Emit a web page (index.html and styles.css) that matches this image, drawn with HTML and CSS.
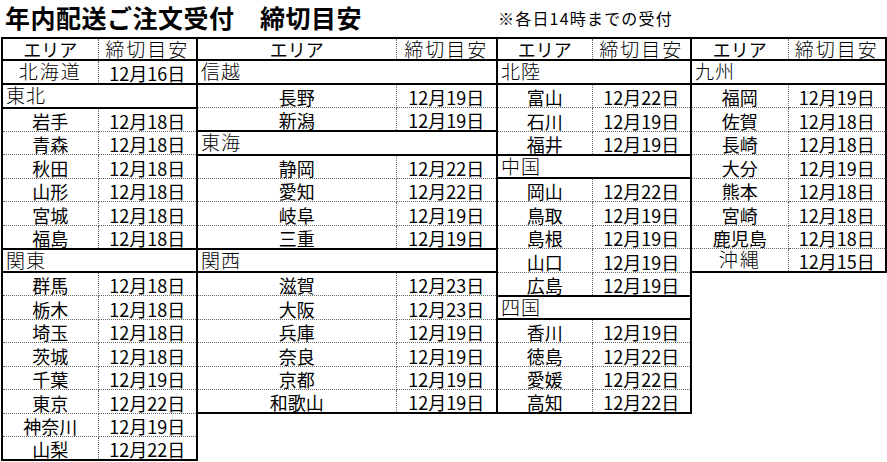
FILE: index.html
```html
<!DOCTYPE html>
<html lang="ja">
<head>
    <meta charset="UTF-8">
    <title>年内配送ご注文受付 締切目安</title>
    <link rel="stylesheet" href="styles.css">
</head>
<body>

    <div class="top">
        <h1 class="title">年内配送ご注文受付　締切目安</h1>
        <p class="note">※各日14時までの受付</p>
    </div>

    <table class="sheet">
        <colgroup>
            <col class="c-a"><col class="c-b">
            <col class="c-c"><col class="c-d">
            <col class="c-e"><col class="c-f">
            <col class="c-g"><col class="c-h">
        </colgroup>
        <tr class="head">
            <td class="n">エリア</td><td class="d thin">締切目安</td>
            <td class="n">エリア</td><td class="d thin">締切目安</td>
            <td class="n">エリア</td><td class="d thin">締切目安</td>
            <td class="n">エリア</td><td class="d thin">締切目安</td>
        </tr>
        <tr class="first">
            <td class="n thin pre">北海道</td><td class="d pre">12月16日</td>
            <td class="r" colspan="2">信越</td>
            <td class="r" colspan="2">北陸</td>
            <td class="r" colspan="2">九州</td>
        </tr>
        <tr>
            <td class="r" colspan="2">東北</td>
            <td class="n">長野</td><td class="d">12月19日</td>
            <td class="n">富山</td><td class="d">12月22日</td>
            <td class="n">福岡</td><td class="d">12月19日</td>
        </tr>
        <tr>
            <td class="n">岩手</td><td class="d">12月18日</td>
            <td class="n">新潟</td><td class="d">12月19日</td>
            <td class="n">石川</td><td class="d">12月19日</td>
            <td class="n">佐賀</td><td class="d">12月18日</td>
        </tr>
        <tr>
            <td class="n">青森</td><td class="d">12月18日</td>
            <td class="r" colspan="2">東海</td>
            <td class="n">福井</td><td class="d">12月19日</td>
            <td class="n">長崎</td><td class="d">12月18日</td>
        </tr>
        <tr>
            <td class="n">秋田</td><td class="d">12月18日</td>
            <td class="n">静岡</td><td class="d">12月22日</td>
            <td class="r" colspan="2">中国</td>
            <td class="n">大分</td><td class="d">12月19日</td>
        </tr>
        <tr>
            <td class="n">山形</td><td class="d">12月18日</td>
            <td class="n">愛知</td><td class="d">12月22日</td>
            <td class="n">岡山</td><td class="d">12月22日</td>
            <td class="n">熊本</td><td class="d">12月18日</td>
        </tr>
        <tr>
            <td class="n">宮城</td><td class="d">12月18日</td>
            <td class="n">岐阜</td><td class="d">12月19日</td>
            <td class="n">鳥取</td><td class="d">12月19日</td>
            <td class="n">宮崎</td><td class="d">12月18日</td>
        </tr>
        <tr>
            <td class="n">福島</td><td class="d">12月18日</td>
            <td class="n">三重</td><td class="d">12月19日</td>
            <td class="n">島根</td><td class="d">12月19日</td>
            <td class="n">鹿児島</td><td class="d">12月18日</td>
        </tr>
        <tr>
            <td class="r" colspan="2">関東</td>
            <td class="r" colspan="2">関西</td>
            <td class="n">山口</td><td class="d">12月19日</td>
            <td class="n thin last">沖縄</td><td class="d last">12月15日</td>
        </tr>
        <tr>
            <td class="n">群馬</td><td class="d">12月18日</td>
            <td class="n">滋賀</td><td class="d">12月23日</td>
            <td class="n">広島</td><td class="d">12月19日</td>
            <td class="e"></td><td class="e"></td>
        </tr>
        <tr>
            <td class="n">栃木</td><td class="d">12月18日</td>
            <td class="n">大阪</td><td class="d">12月23日</td>
            <td class="r" colspan="2">四国</td>
            <td class="e"></td><td class="e"></td>
        </tr>
        <tr>
            <td class="n">埼玉</td><td class="d">12月18日</td>
            <td class="n">兵庫</td><td class="d">12月19日</td>
            <td class="n">香川</td><td class="d">12月19日</td>
            <td class="e"></td><td class="e"></td>
        </tr>
        <tr>
            <td class="n">茨城</td><td class="d">12月18日</td>
            <td class="n">奈良</td><td class="d">12月19日</td>
            <td class="n">徳島</td><td class="d">12月22日</td>
            <td class="e"></td><td class="e"></td>
        </tr>
        <tr>
            <td class="n">千葉</td><td class="d">12月19日</td>
            <td class="n">京都</td><td class="d">12月19日</td>
            <td class="n">愛媛</td><td class="d">12月22日</td>
            <td class="e"></td><td class="e"></td>
        </tr>
        <tr>
            <td class="n">東京</td><td class="d">12月22日</td>
            <td class="n last">和歌山</td><td class="d last">12月19日</td>
            <td class="n last">高知</td><td class="d last">12月22日</td>
            <td class="e"></td><td class="e"></td>
        </tr>
        <tr>
            <td class="n">神奈川</td><td class="d">12月19日</td>
            <td class="e"></td><td class="e"></td>
            <td class="e"></td><td class="e"></td>
            <td class="e"></td><td class="e"></td>
        </tr>
        <tr>
            <td class="n last">山梨</td><td class="d last">12月22日</td>
            <td class="e"></td><td class="e"></td>
            <td class="e"></td><td class="e"></td>
            <td class="e"></td><td class="e"></td>
        </tr>
    </table>

</body>
</html>
```

FILE: styles.css
```css
body {
    margin: 0;
    padding: 0;
    background: #fff;
    color: #000;
    font-family: "Noto Sans CJK JP", "Noto Sans", sans-serif;
}

/* Title line */
.top {
    display: flex;
    align-items: flex-start;
    height: 37px;
    padding-left: 5px;
}

.title {
    flex: 0 0 493px;
    margin: 0;
    padding-top: 2px;
    font-size: 25px;
    line-height: 30px;
    font-weight: 700;
    letter-spacing: 0.5px;
}

.note {
    margin: 0;
    padding-top: 8px;
    font-size: 16px;
    line-height: 20px;
    letter-spacing: 1.2px;
}

/* Sheet */
.sheet {
    border-collapse: collapse;
    table-layout: fixed;
    width: 885px;
    margin-left: 1px;
}

.c-a { width: 96px; }
.c-b { width: 99px; }
.c-c { width: 199px; }
.c-d { width: 101px; }
.c-e { width: 95px; }
.c-f { width: 99px; }
.c-g { width: 97px; }
.c-h { width: 98px; }

.sheet tr {
    height: 23.5px;
}

.sheet tr.head {
    height: 21px;
}

.sheet tr.first {
    height: 24px;
}

.sheet td {
    padding: 0;
    font-size: 18px;
    line-height: 20px;
    text-align: center;
    vertical-align: bottom;
    white-space: nowrap;
}

/* name cell */
.sheet td.n {
    border-left: 2px solid #000;
    border-right: 1px dotted #666;
    border-bottom: 1px dotted #666;
}

/* date cell */
.sheet td.d {
    border-right: 2px solid #000;
    border-bottom: 1px dotted #666;
}

.sheet tr.head td {
    border-top: 2px solid #000;
    border-bottom: 2px solid #000;
}

/* region header spanning both columns */
.sheet td.r {
    border: 2px solid #000;
    text-align: left;
    padding-left: 3px;
    vertical-align: top;
    font-size: 19px;
    font-weight: 300;
    letter-spacing: 1px;
    line-height: 19px;
}

.sheet td.thin {
    font-size: 19px;
    font-weight: 300;
    letter-spacing: 2px;
    line-height: 19px;
    vertical-align: top;
}

.sheet td.pre {
    border-bottom: 2px solid #000;
}

.sheet td.last {
    border-bottom: 2px solid #000;
}

.sheet td.e {
    border: none;
}
```
